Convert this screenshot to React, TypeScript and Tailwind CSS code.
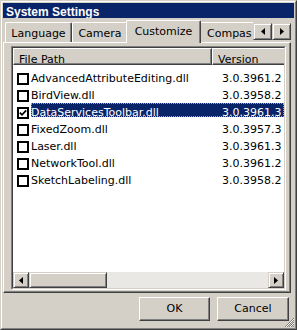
import React from "react";

// classic win32 bevels
const raised =
  "border border-t-white border-l-white border-r-[#404040] border-b-[#404040] shadow-[inset_-1px_-1px_0_#808080]";
const scrollBtn =
  "border border-t-[#d4d0c8] border-l-[#d4d0c8] border-r-[#404040] border-b-[#404040] shadow-[inset_1px_1px_0_#ffffff,inset_-1px_-1px_0_#808080]";

const rows = [
  { name: "AdvancedAttributeEditing.dll", version: "3.0.3961.2", checked: false },
  { name: "BirdView.dll", version: "3.0.3958.2", checked: false },
  { name: "DataServicesToolbar.dll", version: "3.0.3961.3", checked: true, selected: true },
  { name: "FixedZoom.dll", version: "3.0.3957.3", checked: false },
  { name: "Laser.dll", version: "3.0.3961.3", checked: false },
  { name: "NetworkTool.dll", version: "3.0.3961.2", checked: false },
  { name: "SketchLabeling.dll", version: "3.0.3958.2", checked: false },
];

const Arrow = ({ dir, size = 7 }: { dir: "left" | "right"; size?: number }) => (
  <svg width={4} height={size} viewBox={`0 0 4 ${size}`}>
    {dir === "left" ? (
      <polygon points={`4,0 4,${size} 0,${size / 2}`} fill="#000" />
    ) : (
      <polygon points={`0,0 0,${size} 4,${size / 2}`} fill="#000" />
    )}
  </svg>
);

const CheckBox = ({ checked }: { checked: boolean }) => (
  <div className="mt-[2px] flex h-[12px] w-[12px] shrink-0 items-center justify-center border-2 border-black bg-white">
    {checked && (
      <svg width={8} height={8} viewBox="0 0 8 8">
        <polyline points="0.8,3.6 3,5.8 7.2,1.4" fill="none" stroke="#000" strokeWidth={1.7} />
      </svg>
    )}
  </div>
);

export default function App() {
  return (
    <div className="h-[330px] w-[297px] border border-t-[#d4d0c8] border-l-[#d4d0c8] border-r-[#404040] border-b-[#404040] bg-[#d4d0c8] font-['DejaVu_Sans',sans-serif] text-[11px] text-black">
      <div className="relative flex h-full flex-col border border-t-white border-l-white border-r-[#808080] border-b-[#808080]">
        {/* title bar */}
        <div className="mx-[1px] mt-[1px] h-[15px] shrink-0 overflow-hidden bg-[#0a246a] pl-[3px] pt-[3px] font-['Liberation_Sans',Arial,sans-serif] text-[12px] font-bold leading-[12px] text-white">
          System Settings
        </div>

        {/* tabs */}
        <div className="relative z-10 mb-[-1px] flex h-[25px] shrink-0 items-end pl-[3px] pr-[4px]">
          <div className="mb-[1px] flex h-[20px] w-[67px] justify-center rounded-t-[2px] border-l border-t border-r border-l-white border-t-white border-r-[#404040] pt-[4px] leading-[14px] shadow-[inset_-1px_0_0_#808080]">
            Language
          </div>
          <div className="mb-[1px] flex h-[20px] w-[56px] justify-center rounded-t-[2px] border-l border-t border-r border-l-white border-t-white border-r-[#404040] pt-[4px] leading-[14px] shadow-[inset_-1px_0_0_#808080]">
            Camera
          </div>
          <div className="relative z-10 mx-[-2px] flex h-[23px] w-[75px] justify-center rounded-t-[2px] border-l border-t border-r border-l-white border-t-white border-r-[#404040] bg-[#d4d0c8] pt-[4px] leading-[14px] shadow-[inset_-1px_0_0_#808080]">
            Customize
          </div>
          <div className="mb-[1px] h-[20px] flex-1 overflow-hidden whitespace-nowrap rounded-tl-[2px] border-l border-t border-l-white border-t-white pl-[7px] pt-[4px] leading-[14px]">
            Compas
          </div>
          <div className={`mb-[3px] flex h-[17px] w-[19px] items-center justify-center ${scrollBtn}`}>
            <Arrow dir="left" />
          </div>
          <div className={`mb-[3px] flex h-[17px] w-[19px] items-center justify-center ${scrollBtn}`}>
            <Arrow dir="right" />
          </div>
        </div>

        {/* tab panel */}
        <div className="ml-[1px] h-[251px] w-[288px] shrink-0 border border-t-white border-l-white border-r-[#404040] border-b-[#404040] pl-[7px] pt-[3px] shadow-[inset_-1px_-1px_0_#808080]">
          <div className="h-[244px] w-[275px] border border-t-[#808080] border-l-[#808080] border-r-white border-b-white">
            <div className="flex h-full flex-col overflow-hidden border border-t-[#404040] border-l-[#404040] border-r-[#d4d0c8] border-b-[#d4d0c8] bg-white">
              {/* header */}
              <div className="flex h-[17px] shrink-0 bg-[#d4d0c8]">
                <div className={`w-[199px] pl-[5px] pt-[4px] leading-[13px] ${raised}`}>File Path</div>
                <div className="flex-1 border-l border-t border-b border-l-white border-t-white border-b-[#404040] pl-[5px] pt-[4px] leading-[13px] shadow-[inset_0_-1px_0_#808080]">
                  Version
                </div>
              </div>

              {/* rows */}
              <div className="flex flex-1 flex-col pt-[6px]">
                {rows.map((r) => (
                  <div key={r.name} className="flex h-[17px] shrink-0 items-start">
                    <div className="pl-[4px]">
                      <CheckBox checked={r.checked} />
                    </div>
                    <div
                      className={`ml-[2px] mt-[-2px] flex h-[14px] flex-1 whitespace-nowrap pt-[3px] leading-[14px] ${
                        r.selected
                          ? "bg-[#0a246a] text-white outline-1 -outline-offset-1 outline-dotted outline-[#9aa3c0]"
                          : ""
                      }`}
                    >
                      <span className="w-[191px] shrink-0">{r.name}</span>
                      <span>{r.version}</span>
                    </div>
                  </div>
                ))}
              </div>

              {/* horizontal scrollbar */}
              <div className="flex h-[16px] shrink-0">
                <div className={`flex w-[16px] items-center justify-center ${scrollBtn} bg-[#d4d0c8]`}>
                  <Arrow dir="left" />
                </div>
                <div className={`w-[78px] bg-[#d4d0c8] ${scrollBtn}`} />
                <div className="flex-1 bg-[#eae8e4]" />
                <div className={`flex w-[16px] items-center justify-center ${scrollBtn} bg-[#d4d0c8]`}>
                  <Arrow dir="right" />
                </div>
              </div>
            </div>
          </div>
        </div>

        {/* dialog buttons */}
        <div className="mt-[4px] flex shrink-0 justify-end gap-[7px] pr-[6px]">
          <button className={`h-[24px] w-[71px] bg-[#d4d0c8] leading-[14px] ${raised}`}>OK</button>
          <button className={`h-[24px] w-[72px] bg-[#d4d0c8] leading-[14px] ${raised}`}>Cancel</button>
        </div>

        {/* size grip */}
        <svg className="absolute bottom-0 right-0" width={11} height={11} viewBox="0 0 11 11">
          <path d="M10 1 L1 10 M10 5 L5 10 M10 9 L9 10" stroke="#808080" strokeWidth={1} />
          <path d="M10 2 L2 10 M10 6 L6 10" stroke="#ffffff" strokeWidth={1} />
          <path d="M10 3 L3 10 M10 7 L7 10" stroke="#808080" strokeWidth={1} />
        </svg>
      </div>
    </div>
  );
}
